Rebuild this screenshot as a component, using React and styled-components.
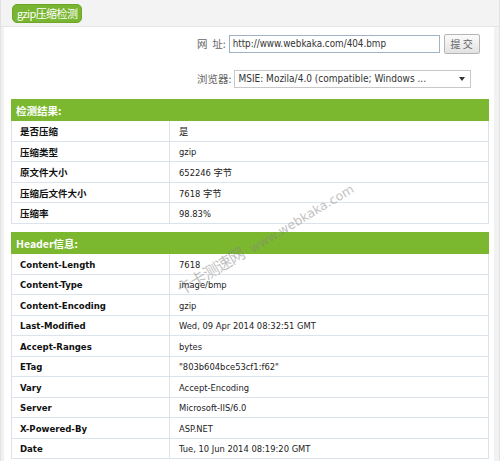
import React from 'react'
import styled, { createGlobalStyle } from 'styled-components'

const GlobalStyle = createGlobalStyle`
  html, body {
    margin: 0;
    padding: 0;
    background: #f2f2f2;
  }
  * {
    box-sizing: border-box;
  }
`

const latin = `"DejaVu Sans", "Noto Sans CJK SC", sans-serif`
const cjk = `"Noto Sans CJK SC", "DejaVu Sans", sans-serif`

const results = [
  ['是否压缩', '是'],
  ['压缩类型', 'gzip'],
  ['原文件大小', '652246 字节'],
  ['压缩后文件大小', '7618 字节'],
  ['压缩率', '98.83%'],
]

const headers = [
  ['Content-Length', '7618'],
  ['Content-Type', 'image/bmp'],
  ['Content-Encoding', 'gzip'],
  ['Last-Modified', 'Wed, 09 Apr 2014 08:32:51 GMT'],
  ['Accept-Ranges', 'bytes'],
  ['ETag', '"803b604bce53cf1:f62"'],
  ['Vary', 'Accept-Encoding'],
  ['Server', 'Microsoft-IIS/6.0'],
  ['X-Powered-By', 'ASP.NET'],
  ['Date', 'Tue, 10 Jun 2014 08:19:20 GMT'],
]

const App = () => {
  return (
    <Page>
      <GlobalStyle />
      <TitleBar>
        <TitlePill>gzip压缩检测</TitlePill>
      </TitleBar>
      <Content>
        <Form>
          <FormRow>
            <FormLabel>网&nbsp;&nbsp;址:</FormLabel>
            <UrlInput readOnly value="http://www.webkaka.com/404.bmp" />
            <SubmitButton>提 交</SubmitButton>
          </FormRow>
          <FormRow>
            <FormLabel>浏览器:</FormLabel>
            <SelectBox>
              <span>MSIE: Mozila/4.0 (compatible; Windows ...</span>
              <Caret />
            </SelectBox>
          </FormRow>
        </Form>

        <ResultTable>
          <thead>
            <tr>
              <HeadCell colSpan={2}>检测结果:</HeadCell>
            </tr>
          </thead>
          <tbody>
            {results.map(([k, v]) => (
              <tr key={k}>
                <KeyCell $cjk>{k}</KeyCell>
                <ValueCell>{v}</ValueCell>
              </tr>
            ))}
          </tbody>
        </ResultTable>

        <ResultTable>
          <thead>
            <tr>
              <HeadCell colSpan={2}>Header信息:</HeadCell>
            </tr>
          </thead>
          <tbody>
            {headers.map(([k, v]) => (
              <tr key={k}>
                <KeyCell>{k}</KeyCell>
                <ValueCell>{v}</ValueCell>
              </tr>
            ))}
          </tbody>
        </ResultTable>

        <Watermark>
          <span>卡卡测速网</span>
          <small>www.webkaka.com</small>
        </Watermark>
      </Content>
    </Page>
  )
}

const Page = styled.div`
  width: 500px;
  height: 461px;
  background: #f2f2f2;
  border-left: 1px solid #e2e2e2;
  border-right: 1px solid #e2e2e2;
  display: flex;
  flex-direction: column;
  overflow: hidden;
`

const TitleBar = styled.div`
  height: 27px;
  flex: none;
  display: flex;
  align-items: center;
  padding-left: 11px;
  background: #f3f3f3;
  border-bottom: 1px solid #e4e4e4;
`

const TitlePill = styled.div`
  height: 19px;
  padding: 0 4px;
  border-radius: 5px;
  background: #79b530;
  border: 1px solid #6ea62a;
  color: #fff;
  font-family: ${cjk};
  font-size: 11px;
  line-height: 17px;
  letter-spacing: -0.6px;
`

const Content = styled.div`
  position: relative;
  flex: 1;
  margin: 0 5px 3px 3px;
  padding: 0 5px 0 7px;
  background: #fff;
`

const Form = styled.div`
  display: flex;
  flex-direction: column;
  gap: 16px;
  padding: 7px 0 11px 186px;
`

const FormRow = styled.div`
  display: flex;
  align-items: center;
  height: 19px;
  gap: 3px;
`

const FormLabel = styled.span`
  font-family: ${cjk};
  font-size: 10.5px;
  color: #666;
  white-space: nowrap;
`

const UrlInput = styled.input`
  width: 211px;
  height: 18px;
  margin: 0;
  padding: 0 3px;
  border: 1px solid #9fb2c6;
  font-family: ${latin};
  font-stretch: condensed;
  font-size: 9.8px;
  color: #333;
  outline: none;
`

const SubmitButton = styled.button`
  width: 36px;
  height: 20px;
  margin-left: 1px;
  padding: 0;
  border: 1px solid #b5b5b5;
  border-radius: 2px;
  background: linear-gradient(#fbfbfb, #e2e2e2);
  font-family: ${cjk};
  font-size: 10px;
  color: #666;
`

const SelectBox = styled.div`
  width: 237px;
  height: 18px;
  display: flex;
  align-items: center;
  justify-content: space-between;
  padding: 0 5px 0 3px;
  border: 1px solid #c8c8c8;
  background: #fff;
  font-family: ${latin};
  font-stretch: condensed;
  font-size: 10px;
  color: #333;
  white-space: nowrap;
`

const Caret = styled.i`
  width: 0;
  height: 0;
  border-left: 3px solid transparent;
  border-right: 3px solid transparent;
  border-top: 4px solid #333;
`

const ResultTable = styled.table`
  width: 100%;
  border-collapse: collapse;
  margin-bottom: 8px;
  font-size: 10px;

  td {
    border: 1px solid #dbe3ec;
    height: 20px;
  }

  tbody tr:nth-child(odd) td {
    height: 21px;
  }
`

const HeadCell = styled.th`
  height: 21px;
  padding: 0 4px;
  text-align: left;
  background: #7cb82f;
  border: 1px solid #7cb82f;
  color: #fff;
  font-family: ${cjk};
  font-size: 10.5px;
  font-weight: bold;
`

const KeyCell = styled.td`
  width: 158px;
  padding: 0 8px;
  font-family: ${({ $cjk }) => ($cjk ? cjk : latin)};
  font-stretch: condensed;
  font-size: 9.5px;
  font-weight: bold;
  color: #111;
`

const ValueCell = styled.td`
  padding: 0 9px;
  font-family: ${latin};
  font-stretch: condensed;
  font-size: 9.3px;
  color: #222;
`

const Watermark = styled.div`
  position: absolute;
  left: 180px;
  top: 249px;
  transform: rotate(-31deg);
  transform-origin: 0 100%;
  display: flex;
  align-items: baseline;
  gap: 8px;
  white-space: nowrap;
  color: rgba(130, 130, 130, 0.5);
  pointer-events: none;

  span {
    font-family: ${cjk};
    font-size: 16px;
    letter-spacing: -1px;
  }

  small {
    font-family: ${latin};
    font-size: 12.5px;
  }
`

export default App
